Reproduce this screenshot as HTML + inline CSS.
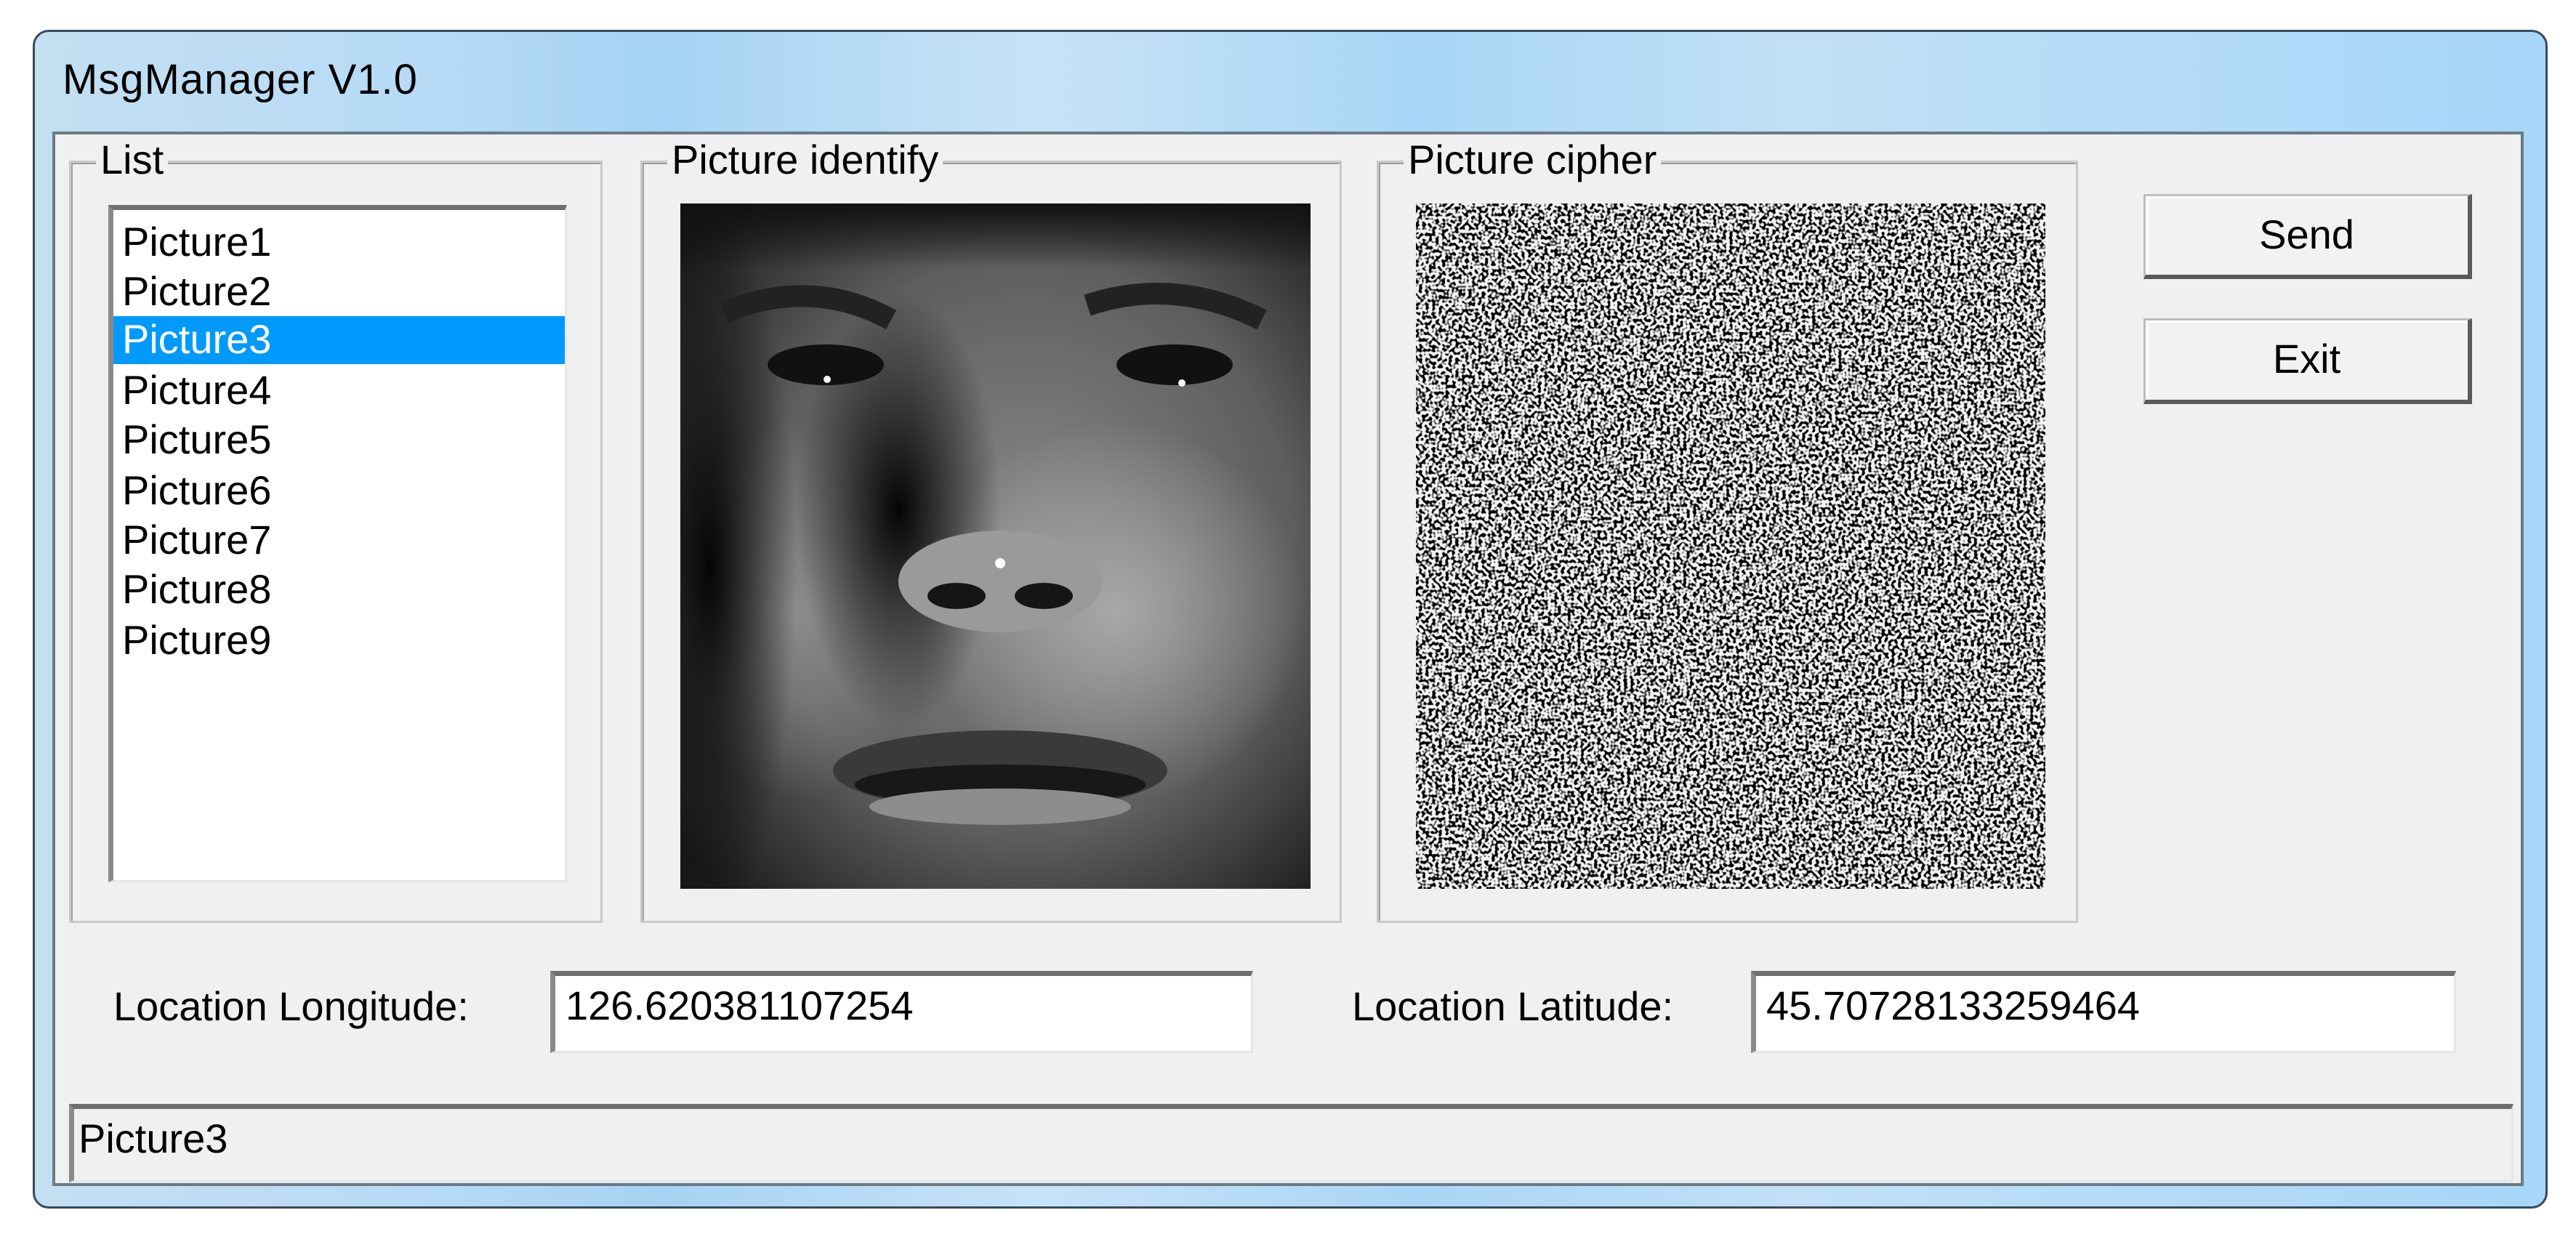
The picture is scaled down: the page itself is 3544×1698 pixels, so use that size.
<!DOCTYPE html>
<html><head><meta charset="utf-8"><style>
*{margin:0;padding:0;box-sizing:border-box}
body{width:3544px;height:1698px;background:#fff;position:relative;overflow:hidden;font-family:"Liberation Sans",sans-serif;color:#000}
.abs{position:absolute}
.win{left:45px;top:41px;width:3460px;height:1622px;border:3px solid #3a4a58;border-radius:22px;background:linear-gradient(90deg,#c4dff2 0%,#b7dbf6 15%,#a6d3f3 25%,#c7e3f7 40%,#a9d6f6 55%,#c0e0f6 70%,#a7d6f8 100%)}
.title{left:86px;top:76px;font-size:58px;letter-spacing:1px}
.client{left:72px;top:181px;width:3400px;height:1451px;background:#f0f0f0;border:4px solid #6b7a86}
.grp{border:3px solid #c9c9c9;box-shadow:inset 2px 2px 0 #a0a0a0}
.glabel{font-size:56px;background:#f0f0f0;padding:0 6px;line-height:60px}
.sunk{background:#fff;border-top:7px solid #6e6e6e;border-left:7px solid #8a8a8a;border-right:3px solid #e6e6e6;border-bottom:3px solid #e6e6e6}
.item{position:absolute;left:12px;font-size:56px;line-height:68px;height:68px}
.btn{background:#f2f2f2;border:3px solid #bdbdbd;border-right:6px solid #5a5a5a;border-bottom:6px solid #5a5a5a;box-shadow:inset 3px 3px 0 #fff;font-size:56px;text-align:center}
.lbl{font-size:56px}
</style></head><body>
<div class="abs win"></div>
<div class="abs title">MsgManager V1.0</div>
<div class="abs client"></div>

<div class="abs grp" style="left:95px;top:221px;width:734px;height:1049px"></div>
<div class="abs glabel" style="left:132px;top:190px">List</div>
<div class="abs sunk" style="left:149px;top:282px;width:631px;height:932px">
  <div class="item" style="top:10px">Picture1</div>
  <div class="item" style="top:78px">Picture2</div>
  <div class="abs" style="left:0;top:146px;width:621px;height:66px;background:#0099fc"></div>
  <div class="item" style="top:144px;color:#fff">Picture3</div>
  <div class="item" style="top:214px">Picture4</div>
  <div class="item" style="top:282px">Picture5</div>
  <div class="item" style="top:352px">Picture6</div>
  <div class="item" style="top:420px">Picture7</div>
  <div class="item" style="top:488px">Picture8</div>
  <div class="item" style="top:558px">Picture9</div>
</div>

<div class="abs grp" style="left:881px;top:221px;width:965px;height:1049px"></div>
<div class="abs glabel" style="left:918px;top:190px">Picture identify</div>
<svg class="abs" style="left:936px;top:280px" width="867" height="943" viewBox="0 0 867 943">
<defs>
<radialGradient id="fc" cx="0.55" cy="0.5" r="0.7"><stop offset="0" stop-color="#8a8a8a"/><stop offset="0.6" stop-color="#5e5e5e"/><stop offset="1" stop-color="#1a1a1a"/></radialGradient>
<radialGradient id="ck" cx="0.5" cy="0.5" r="0.5"><stop offset="0" stop-color="#a8a8a8"/><stop offset="1" stop-color="#a8a8a8" stop-opacity="0"/></radialGradient>
<radialGradient id="sh" cx="0.5" cy="0.5" r="0.5"><stop offset="0" stop-color="#050505"/><stop offset="1" stop-color="#050505" stop-opacity="0"/></radialGradient>
<linearGradient id="hr" x1="0" y1="0" x2="0" y2="1"><stop offset="0" stop-color="#111"/><stop offset="1" stop-color="#111" stop-opacity="0"/></linearGradient>
</defs>
<rect width="867" height="943" fill="url(#fc)"/>
<rect width="867" height="90" fill="url(#hr)"/>
<ellipse cx="600" cy="560" rx="260" ry="260" fill="url(#ck)"/>
<ellipse cx="160" cy="560" rx="180" ry="260" fill="url(#ck)" opacity="0.6"/>
<ellipse cx="300" cy="420" rx="140" ry="300" fill="url(#sh)"/>
<ellipse cx="40" cy="500" rx="120" ry="500" fill="url(#sh)"/>
<path d="M60 150 Q180 100 290 160" stroke="#222" stroke-width="30" fill="none"/>
<path d="M560 140 Q680 100 800 160" stroke="#222" stroke-width="30" fill="none"/>
<ellipse cx="200" cy="222" rx="80" ry="28" fill="#111"/>
<ellipse cx="680" cy="222" rx="80" ry="28" fill="#111"/>
<circle cx="202" cy="242" r="5" fill="#fff"/><circle cx="690" cy="247" r="5" fill="#fff"/>
<ellipse cx="440" cy="520" rx="140" ry="70" fill="#9a9a9a"/>
<ellipse cx="380" cy="540" rx="40" ry="18" fill="#151515"/>
<ellipse cx="500" cy="540" rx="40" ry="18" fill="#151515"/>
<circle cx="440" cy="495" r="7" fill="#fff"/>
<ellipse cx="440" cy="780" rx="230" ry="55" fill="#3a3a3a"/>
<ellipse cx="440" cy="800" rx="200" ry="28" fill="#181818"/>
<ellipse cx="440" cy="830" rx="180" ry="25" fill="#8d8d8d"/>
</svg>

<div class="abs grp" style="left:1894px;top:221px;width:965px;height:1049px"></div>
<div class="abs glabel" style="left:1931px;top:190px">Picture cipher</div>
<svg class="abs" style="left:1948px;top:280px" width="866" height="943">
<defs><filter id="nz" x="0" y="0" width="1" height="1">
<feTurbulence type="fractalNoise" baseFrequency="0.22" numOctaves="1" seed="3"/>
<feColorMatrix type="matrix" values="0 0 0 0 0  0 0 0 0 0  0 0 0 0 0  7 0 0 0 -3.2"/>
</filter></defs>
<rect width="866" height="943" fill="#f4f4f4"/>
<rect width="866" height="943" filter="url(#nz)"/>
</svg>

<div class="abs btn" style="left:2949px;top:267px;width:452px;height:117px;line-height:105px">Send</div>
<div class="abs btn" style="left:2949px;top:438px;width:452px;height:118px;line-height:106px">Exit</div>

<div class="abs lbl" style="left:156px;top:1352px">Location Longitude:</div>
<div class="abs sunk" style="left:757px;top:1336px;width:967px;height:113px"><div class="lbl" style="padding:8px 0 0 14px">126.620381107254</div></div>
<div class="abs lbl" style="left:1860px;top:1352px">Location Latitude:</div>
<div class="abs sunk" style="left:2409px;top:1336px;width:970px;height:113px"><div class="lbl" style="padding:8px 0 0 14px">45.70728133259464</div></div>

<div class="abs sunk" style="left:95px;top:1519px;width:3363px;height:108px;background:#f0f0f0"><div class="lbl" style="padding:8px 0 0 6px">Picture3</div></div>
</body></html>
